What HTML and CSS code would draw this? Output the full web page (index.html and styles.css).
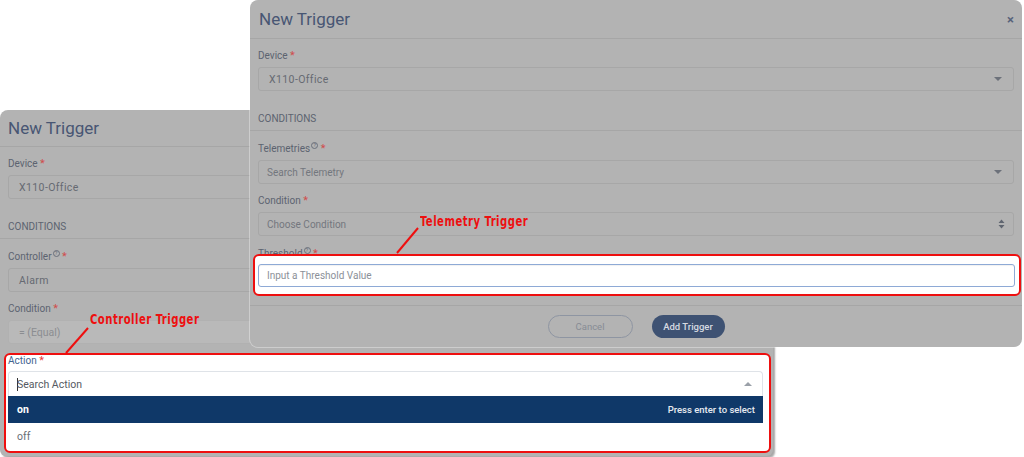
FILE: index.html
```html
<!DOCTYPE html>
<html lang="en">
<head>
    <meta charset="UTF-8">
    <meta name="viewport" content="width=device-width, initial-scale=1.0">
    <title>New Trigger</title>
    <link rel="stylesheet" href="styles.css">
</head>
<body>

    <div class="canvas">

        <!-- Controller trigger (back window) -->
        <section class="modal modal-back">
            <header class="modal-head">
                <h3>New Trigger</h3>
            </header>
            <div class="modal-body">
                <div class="field">
                    <label class="lbl">Device <span class="req">*</span></label>
                    <div class="select spaced">X110-Office <span class="caret"></span></div>
                </div>

                <div class="section-title">CONDITIONS</div>

                <div class="field">
                    <label class="lbl">Controller<span class="help">?</span> <span class="req">*</span></label>
                    <div class="select spaced">Alarm <span class="caret"></span></div>
                </div>

                <div class="field">
                    <label class="lbl">Condition <span class="req">*</span></label>
                    <div class="select spaced disabled">= (Equal)</div>
                </div>

                <div class="highlight highlight-action">
                    <label class="lbl lbl-active">Action <span class="req">*</span></label>
                    <div class="multiselect">
                        <div class="ms-search">
                            <span class="cursor"></span>Search Action
                            <span class="caret caret-up"></span>
                        </div>
                        <ul class="ms-options">
                            <li class="active"><span>on</span><span class="hint">Press enter to select</span></li>
                            <li>off</li>
                        </ul>
                    </div>
                </div>
            </div>
        </section>

        <!-- Telemetry trigger (front window) -->
        <section class="modal modal-front">
            <header class="modal-head">
                <h3>New Trigger</h3>
                <span class="close">&times;</span>
            </header>
            <div class="modal-body">
                <div class="field">
                    <label class="lbl">Device <span class="req">*</span></label>
                    <div class="select spaced">X110-Office <span class="caret"></span></div>
                </div>

                <div class="section-title">CONDITIONS</div>

                <div class="field">
                    <label class="lbl">Telemetries<span class="help">?</span> <span class="req">*</span></label>
                    <div class="select placeholder">Search Telemetry <span class="caret"></span></div>
                </div>

                <div class="field">
                    <label class="lbl">Condition <span class="req">*</span></label>
                    <div class="select placeholder">Choose Condition
                        <svg class="updown" width="7" height="10" viewBox="0 0 7 10">
                            <path d="M3.5 0.5 L6.5 4 L0.5 4 Z M3.5 9.5 L6.5 6 L0.5 6 Z" fill="#5f6570"/>
                        </svg>
                    </div>
                </div>

                <div class="field field-last">
                    <label class="lbl">Threshold<span class="help">?</span> <span class="req">*</span></label>
                    <div class="highlight highlight-threshold">
                        <div class="text-input">Input a Threshold Value</div>
                    </div>
                </div>
            </div>
            <footer class="modal-foot">
                <button class="btn btn-cancel">Cancel</button>
                <button class="btn btn-primary">Add Trigger</button>
            </footer>
        </section>

        <!-- Anotaciones -->
        <span class="callout callout-controller">Controller Trigger</span>
        <span class="callout callout-telemetry">Telemetry Trigger</span>
        <svg class="callout-lines" width="1024" height="457" viewBox="0 0 1024 457">
            <line x1="88" y1="328" x2="66" y2="353" stroke="#ee0f0f" stroke-width="2"/>
            <line x1="418" y1="228" x2="397" y2="253" stroke="#ee0f0f" stroke-width="2"/>
        </svg>
    </div>

</body>
</html>
```

FILE: styles.css
```css
body {
    margin: 0;
    background: #fff;
    font-family: Roboto, "Liberation Sans", sans-serif;
}

.canvas {
    position: relative;
    width: 1024px;
    height: 457px;
    overflow: hidden;
    background: #fff;
}

/* ventanas */
.modal {
    position: absolute;
    background: #b3b3b3;
    box-sizing: border-box;
}

.modal-back {
    left: 0;
    top: 110px;
    width: 773px;
    padding-bottom: 3px;
    border-radius: 8px 8px 6px 6px;
    box-shadow: 2px 2px 2px rgba(0, 0, 0, 0.35);
    z-index: 1;
}

.modal-front {
    left: 250px;
    top: 0;
    width: 772px;
    height: 347px;
    border-radius: 8px;
    box-shadow: 0 0 0 1px rgba(255, 255, 255, 0.35);
    z-index: 2;
}

.modal-head {
    display: flex;
    justify-content: space-between;
    align-items: center;
    height: 38px;
    padding: 0 9px;
    border-bottom: 1px solid #a6a6a6;
}

.modal-back .modal-head {
    height: 36px;
    padding: 0 8px;
}

.modal-head h3 {
    margin: 0;
    font-size: 17px;
    font-weight: 400;
    line-height: 20px;
    color: #485673;
}

.modal-head .close {
    font-size: 13px;
    font-weight: 700;
    color: #57627a;
    margin-right: -1px;
}

.modal-body {
    padding: 11px 8px 9px;
}

.modal-back .modal-body {
    padding: 11px 10px 0 8px;
}

.field {
    margin-bottom: 11px;
}

.field-last {
    margin-bottom: 0;
}

.lbl {
    display: block;
    font-size: 10px;
    line-height: 12px;
    color: #5c6370;
    margin-bottom: 5px;
}

.lbl .req {
    color: #d04c4c;
    font-size: 11px;
}

.lbl .help {
    display: inline-block;
    width: 5px;
    height: 5px;
    margin-left: 1px;
    border: 1px solid #6a707b;
    border-radius: 50%;
    font-size: 5px;
    line-height: 5px;
    text-align: center;
    vertical-align: 5px;
}

.section-title {
    margin: 22px -8px 11px;
    padding: 0 8px 5px;
    font-size: 10px;
    line-height: 12px;
    color: #5c6370;
    border-bottom: 1px solid #a6a6a6;
}

.modal-back .section-title {
    margin-right: -10px;
}

.select {
    display: flex;
    align-items: center;
    justify-content: space-between;
    height: 24px;
    box-sizing: border-box;
    padding: 0 11px 0 8px;
    border: 1px solid #a7a7a7;
    border-radius: 3px;
    font-size: 10px;
    color: #73777e;
}

.select.spaced {
    padding-left: 10px;
    font-size: 10.5px;
    letter-spacing: 0.4px;
    color: #666a72;
}

.select.disabled {
    background: #b9b9b9;
    border-color: #b1b1b1;
    color: #8b8d91;
    letter-spacing: 0;
}

.caret {
    width: 0;
    height: 0;
    border-left: 4px solid transparent;
    border-right: 4px solid transparent;
    border-top: 4px solid #6c717a;
}

.caret-up {
    border-top: none;
    border-bottom: 4px solid #9aa0a8;
}

.updown {
    margin-right: -3px;
}

/* recuadros rojos */
.highlight {
    position: relative;
    background: #fff;
    border: 2px solid #ee0f0f;
    border-radius: 6px;
}

.highlight-threshold {
    margin: -11px -7px 0 -5px;
    padding: 8px 4px 7px 3px;
}

.highlight-action {
    margin: -2px -8px 0 -4px;
    padding: 0 6px 1px 2px;
}

.text-input {
    height: 23px;
    box-sizing: border-box;
    padding: 0 8px;
    display: flex;
    align-items: center;
    border: 1px solid #8eaad6;
    border-radius: 3px;
    box-shadow: inset 0 1px 1px rgba(0, 0, 0, 0.06);
    font-size: 10px;
    color: #8b9098;
}

.lbl-active {
    color: #43638f;
    margin-bottom: 4px;
}

.lbl-active .req {
    color: #ea3b3b;
}

.multiselect {
    font-size: 10.5px;
}

.ms-search {
    display: flex;
    align-items: center;
    height: 25px;
    box-sizing: border-box;
    padding: 0 10px 0 8px;
    border: 1px solid #dfe3e8;
    border-bottom: none;
    border-radius: 4px 4px 0 0;
    color: #555a62;
}

.ms-search .cursor {
    width: 1px;
    height: 13px;
    background: #333;
    margin-right: -1px;
}

.ms-search .caret-up {
    margin-left: auto;
}

.ms-options {
    list-style: none;
    margin: 0;
    padding: 0;
}

.ms-options li {
    display: flex;
    justify-content: space-between;
    align-items: center;
    height: 27px;
    padding: 0 8px 0 9px;
    color: #6a6e75;
}

.ms-options li.active {
    background: #0f3868;
    color: #fff;
    font-weight: 700;
}

.ms-options .hint {
    font-size: 9.5px;
    font-weight: 500;
    color: #e6eaf0;
}

/* pie */
.modal-foot {
    display: flex;
    justify-content: center;
    align-items: center;
    gap: 19px;
    height: 41px;
    border-top: 1px solid #a6a6a6;
}

.btn {
    height: 23px;
    border-radius: 12px;
    font-family: Roboto, "Liberation Sans", sans-serif;
    font-size: 9.5px;
    cursor: pointer;
}

.btn-cancel {
    width: 85px;
    background: none;
    border: 1px solid #8e95a2;
    color: #878c95;
}

.btn-primary {
    width: 73px;
    background: #3e5273;
    border: none;
    color: #d6dae1;
    font-weight: 500;
}

/* anotaciones */
.callout {
    position: absolute;
    z-index: 5;
    font-family: "DejaVu Sans Condensed", "DejaVu Sans", sans-serif;
    font-weight: 700;
    font-size: 14px;
    line-height: 16px;
    letter-spacing: 0.6px;
    color: #ee0f0f;
    transform: scaleX(0.8);
    transform-origin: left center;
}

.callout-controller {
    left: 90px;
    top: 311px;
}

.callout-telemetry {
    left: 420px;
    top: 213px;
}

.callout-lines {
    position: absolute;
    left: 0;
    top: 0;
    z-index: 4;
}
```
